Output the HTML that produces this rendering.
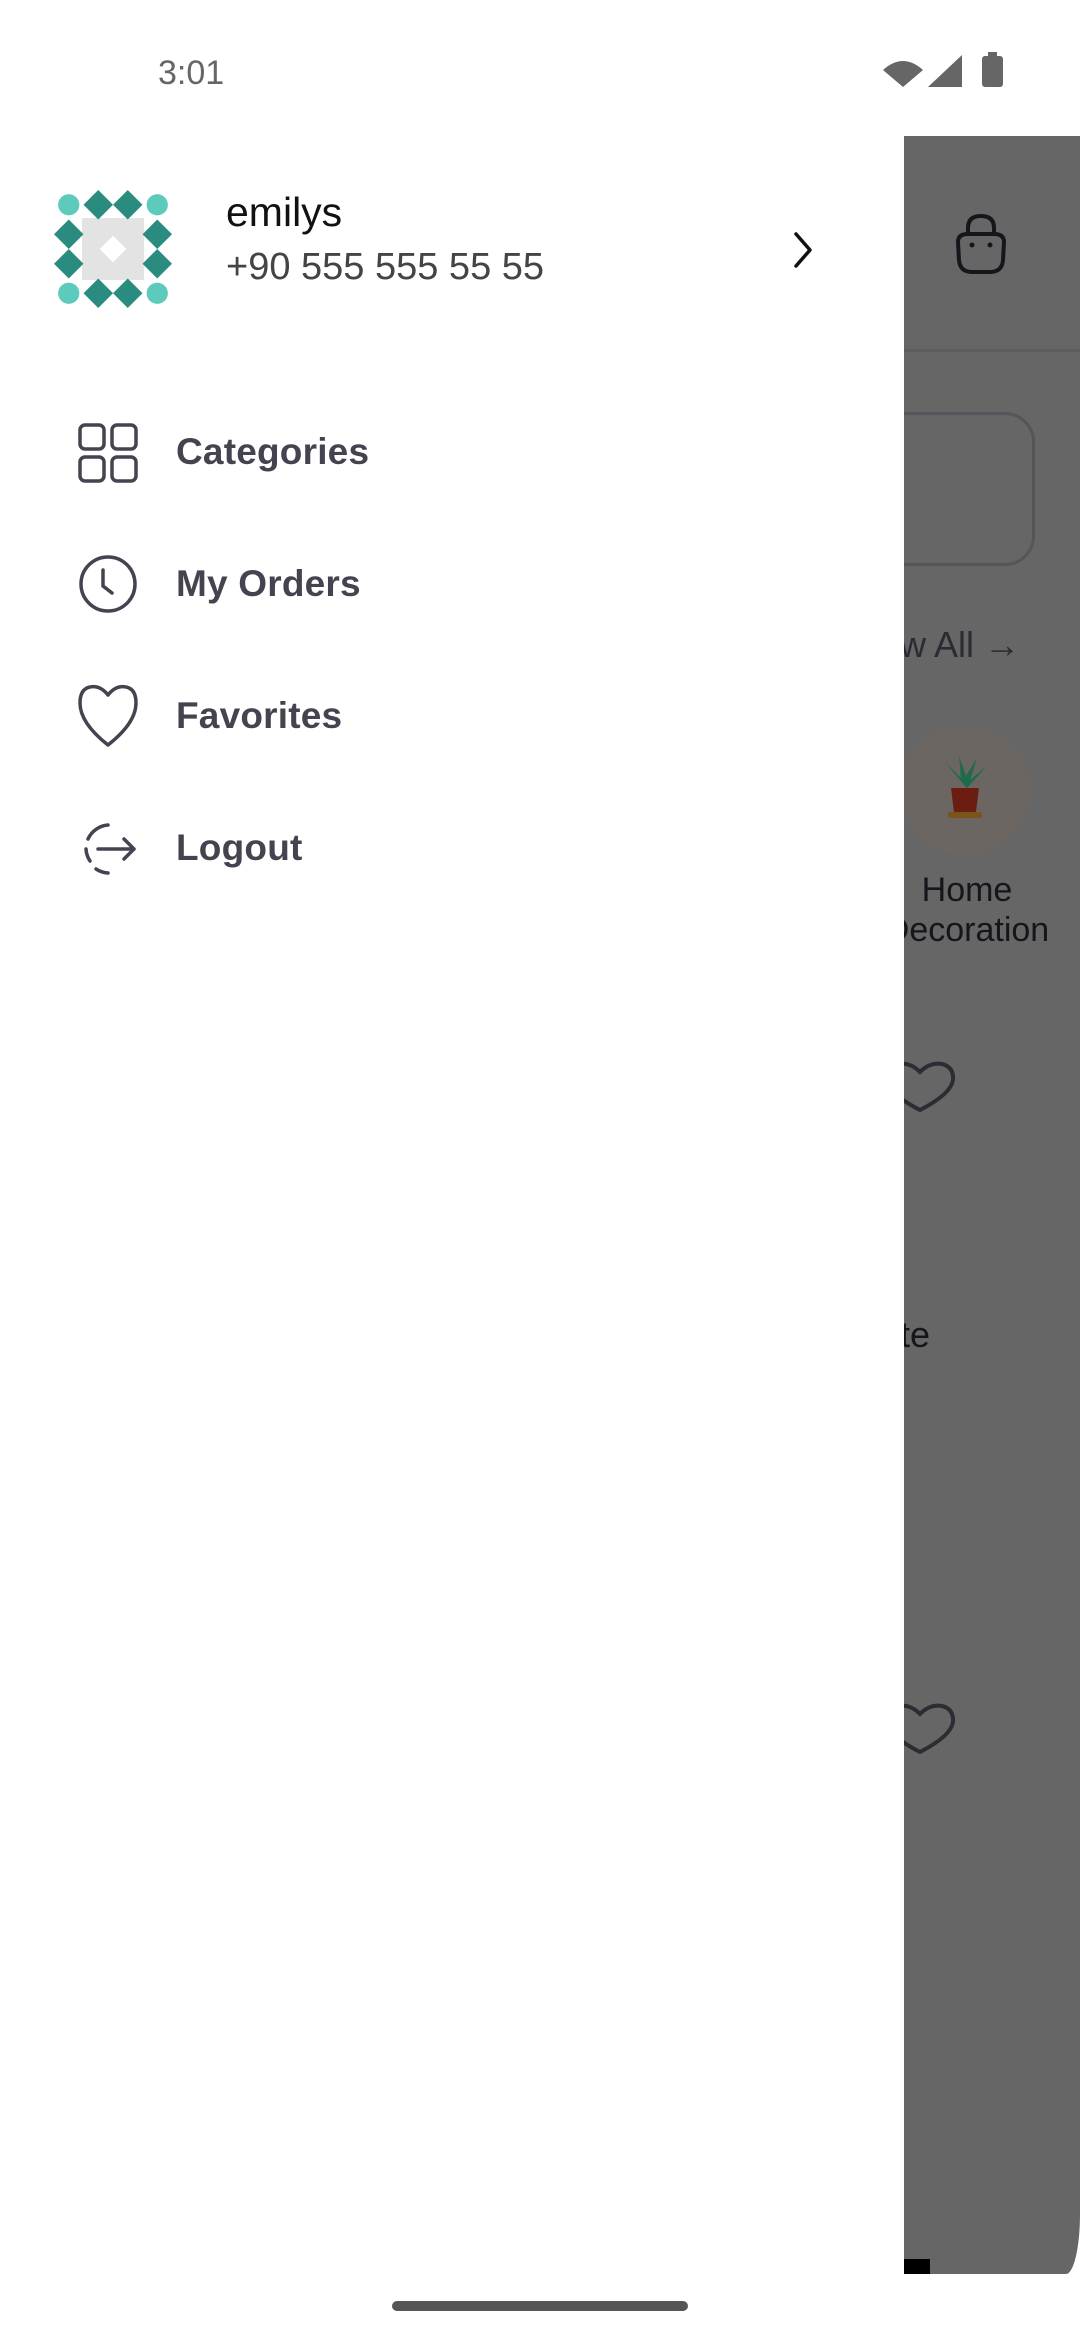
<!DOCTYPE html>
<html><head><meta charset="utf-8"><style>
*{margin:0;padding:0;box-sizing:border-box}
body{width:1080px;height:2340px;position:relative;background:#fff;font-family:"Liberation Sans",sans-serif;overflow:hidden}
.abs{position:absolute}
.menu{position:absolute;left:176px;font-size:37px;font-weight:600;color:#45434f;letter-spacing:0.2px}
.ic{position:absolute;left:76px}
</style></head><body>
<div class="abs" style="left:158px;top:54px;font-size:34px;color:#666">3:01</div>
<svg class="abs" style="left:880px;top:52px" width="130" height="38" viewBox="0 0 130 38">
<path d="M3 18 Q23 0 43 18 L23 35 Z" fill="#666"/>
<path d="M48 35 L82 3 L82 35 Z" fill="#666"/>
<rect x="102" y="4" width="21" height="31" rx="3" fill="#666"/><rect x="108" y="0" width="9" height="5" fill="#666"/>
</svg>

<div class="abs" style="left:904px;top:136px;width:176px;height:2138px;background:#666;border-bottom-right-radius:14px 60px"></div>
<div class="abs" style="left:904px;top:349px;width:176px;height:3px;background:#5d5d5d"></div>
<svg class="abs" style="left:950px;top:212px" width="62" height="64" viewBox="0 0 62 64"><path d="M18 24 V16 Q18 4 31 4 Q44 4 44 16 V24 M8 30 Q8 22 18 22 H44 Q54 22 54 30 L53 48 Q52 60 40 60 H22 Q10 60 9 48 Z" fill="none" stroke="#15161c" stroke-width="4" stroke-linejoin="round"/><circle cx="22" cy="33" r="2.5" fill="#15161c"/><circle cx="40" cy="33" r="2.5" fill="#15161c"/></svg>
<div class="abs" style="left:860px;top:412px;width:175px;height:154px;border:3px solid #55555b;border-radius:30px"></div>
<div class="abs" style="left:904px;top:624px;font-size:36px;color:#2b2b33;white-space:nowrap;overflow:hidden;width:176px"><span style="margin-left:-4px">w All →</span></div>
<div class="abs" style="left:900px;top:725px;width:130px;height:130px;border-radius:50%;background:#6b6661"></div>
<svg class="abs" style="left:935px;top:752px" width="60" height="72" viewBox="0 0 60 72"><path d="M30 34 L10 10 L26 26 L24 4 L31 24 L42 6 L35 28 L52 14 L32 36 Z" fill="#1f6a4c"/><path d="M16 36 H44 L41 60 H19 Z" fill="#6b1d12"/><rect x="13" y="60" width="34" height="6" rx="2" fill="#7a5418"/></svg>
<div class="abs" style="left:904px;top:870px;width:176px;height:120px;overflow:hidden"><div style="position:absolute;left:-44px;width:214px;text-align:center;font-size:34px;line-height:40px;color:#15161c">Home<br>Decoration</div></div>
<svg class="abs" style="left:880px;top:1060px" width="80" height="56" viewBox="0 0 80 56"><path d="M40 12 Q50 2 62 4 Q74 7 73 20 Q71 34 40 50 Q9 34 7 20 Q6 7 18 4 Q30 2 40 12 Z" fill="none" stroke="#2c2d33" stroke-width="4"/></svg>
<div class="abs" style="left:904px;top:1314px;width:176px;overflow:hidden;font-size:36px;color:#15161c"><span style="margin-left:-4px">te</span></div>
<svg class="abs" style="left:880px;top:1702px" width="80" height="56" viewBox="0 0 80 56"><path d="M40 12 Q50 2 62 4 Q74 7 73 20 Q71 34 40 50 Q9 34 7 20 Q6 7 18 4 Q30 2 40 12 Z" fill="none" stroke="#2c2d33" stroke-width="4"/></svg>
<div class="abs" style="left:904px;top:2259px;width:26px;height:15px;background:#000"></div>

<div class="abs" style="left:0;top:136px;width:904px;height:2204px;background:#fff"></div>
<svg class="abs" style="left:54px;top:190px" width="118" height="118" viewBox="0 0 4 4">
<rect x="0.95" y="0.95" width="2.1" height="2.1" fill="#e3e3e3"/>
<path d="M2 1.55 L2.45 2 L2 2.45 L1.55 2 Z" fill="#fff"/>
<g fill="#5ccbbb"><circle cx="0.5" cy="0.5" r="0.36"/><circle cx="3.5" cy="0.5" r="0.36"/><circle cx="0.5" cy="3.5" r="0.36"/><circle cx="3.5" cy="3.5" r="0.36"/></g>
<g fill="#2a8c7e">
<path d="M1.5 0 L2 0.5 L1.5 1 L1 0.5Z"/><path d="M2.5 0 L3 0.5 L2.5 1 L2 0.5Z"/>
<path d="M1.5 3 L2 3.5 L1.5 4 L1 3.5Z"/><path d="M2.5 3 L3 3.5 L2.5 4 L2 3.5Z"/>
<path d="M0.5 1 L1 1.5 L0.5 2 L0 1.5Z"/><path d="M0.5 2 L1 2.5 L0.5 3 L0 2.5Z"/>
<path d="M3.5 1 L4 1.5 L3.5 2 L3 1.5Z"/><path d="M3.5 2 L4 2.5 L3.5 3 L3 2.5Z"/>
</g></svg>
<div class="abs" style="left:226px;top:189px;font-size:41px;color:#111">emilys</div>
<div class="abs" style="left:226px;top:246px;font-size:38px;color:#444">+90 555 555 55 55</div>
<svg class="abs" style="left:788px;top:228px" width="30" height="44" viewBox="0 0 30 44"><path d="M8 6 L22 22 L8 38" fill="none" stroke="#111" stroke-width="3.5" stroke-linecap="round" stroke-linejoin="round"/></svg>

<svg class="ic" style="top:421px" width="64" height="64" viewBox="0 0 64 64"><g fill="none" stroke="#45434f" stroke-width="3.5"><rect x="4" y="4" width="24" height="24" rx="5"/><rect x="36" y="4" width="24" height="24" rx="5"/><rect x="4" y="36" width="24" height="24" rx="5"/><rect x="36" y="36" width="24" height="24" rx="5"/></g></svg>
<div class="menu" style="top:431px">Categories</div>
<svg class="ic" style="top:552px" width="64" height="64" viewBox="0 0 64 64"><g fill="none" stroke="#45434f" stroke-width="3.5" stroke-linecap="round"><circle cx="32" cy="32" r="27"/><path d="M27 18 V34 L36 41"/></g></svg>
<div class="menu" style="top:563px">My Orders</div>
<svg class="ic" style="top:683px" width="64" height="66" viewBox="0 0 64 66"><path d="M32 12 Q40 2 50 4 Q60 6 60 20 Q60 40 32 62 Q4 40 4 20 Q4 6 14 4 Q24 2 32 12 Z" fill="none" stroke="#45434f" stroke-width="3.5" stroke-linejoin="round"/></svg>
<div class="menu" style="top:695px">Favorites</div>
<svg class="ic" style="top:817px" width="64" height="64" viewBox="0 0 64 64"><g fill="none" stroke="#45434f" stroke-width="3.5" stroke-linecap="round" stroke-linejoin="round"><path d="M32 8 A24 24 0 0 0 12 22"/><path d="M10 32 A24 24 0 0 0 14 44"/><path d="M20 52 A24 24 0 0 0 32 56"/><path d="M22 32 H58 M48 22 L58 32 L48 42"/></g></svg>
<div class="menu" style="top:827px">Logout</div>

<div class="abs" style="left:392px;top:2301px;width:296px;height:10px;border-radius:5px;background:#555"></div>
</body></html>
